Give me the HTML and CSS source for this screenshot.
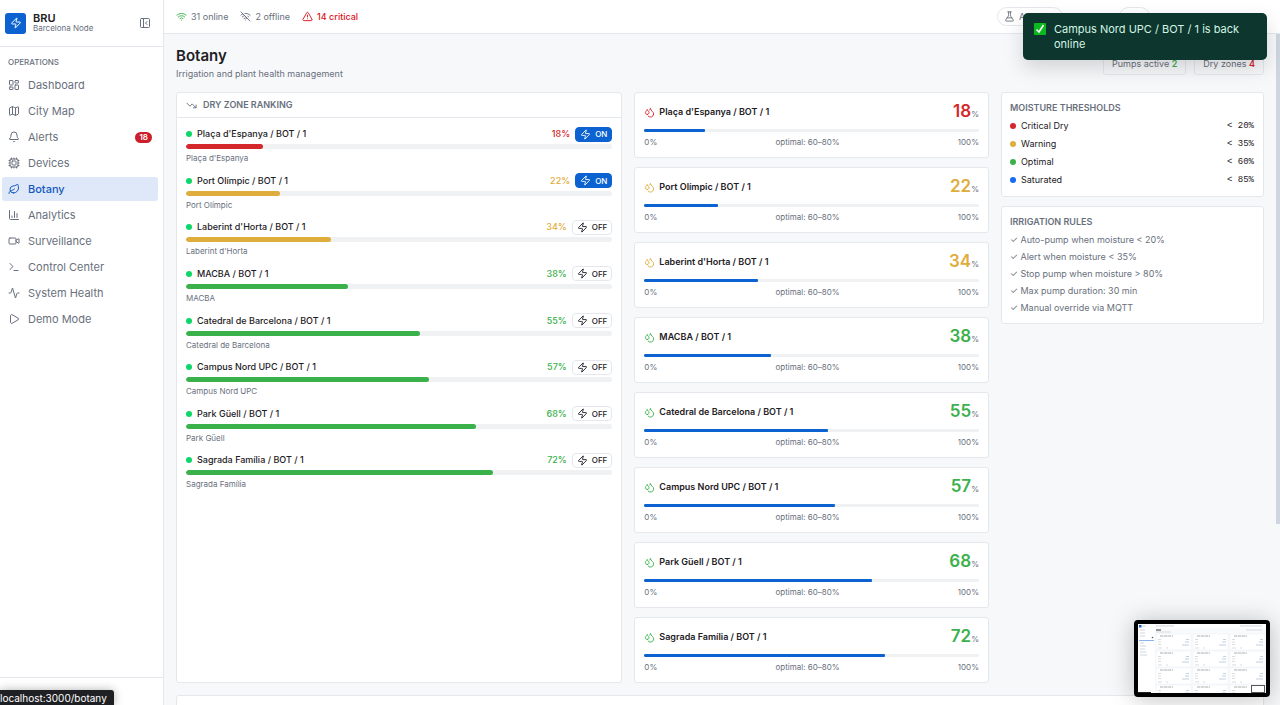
FILE: index.html
```html
<!DOCTYPE html>
<html lang="en">
  <head>
    <meta charset="utf-8" />
    <meta name="viewport" content="width=device-width" />
    <title>BRU - Botany</title>
    <link rel="stylesheet" href="styles.css">
  </head>
  <body>
    <svg class="sprite" aria-hidden="true">
      <symbol id="zap" viewBox="0 0 24 24"><path d="M4 14a1 1 0 0 1-.78-1.63l9.9-10.2a.5.5 0 0 1 .86.46l-1.92 6.02A1 1 0 0 0 13 10h7a1 1 0 0 1 .78 1.63l-9.9 10.2a.5.5 0 0 1-.86-.46l1.92-6.02A1 1 0 0 0 11 14z"/></symbol>
      <symbol id="panel" viewBox="0 0 24 24"><rect width="18" height="18" x="3" y="3" rx="2"/><path d="M9 3v18M16 15l-3-3 3-3"/></symbol>
      <symbol id="dashboard" viewBox="0 0 24 24"><rect width="7" height="9" x="3" y="3" rx="1"/><rect width="7" height="5" x="14" y="3" rx="1"/><rect width="7" height="9" x="14" y="12" rx="1"/><rect width="7" height="5" x="3" y="16" rx="1"/></symbol>
      <symbol id="map" viewBox="0 0 24 24"><path d="M14.1 5.55a2 2 0 0 0 1.8 0l3.65-1.83A1 1 0 0 1 21 4.62v12.76a1 1 0 0 1-.55.9l-4.56 2.27a2 2 0 0 1-1.78 0l-4.22-2.1a2 2 0 0 0-1.78 0l-3.66 1.83A1 1 0 0 1 3 19.38V6.62a1 1 0 0 1 .55-.9l4.56-2.27a2 2 0 0 1 1.78 0zM15 5.76v15M9 3.24v15"/></symbol>
      <symbol id="bell" viewBox="0 0 24 24"><path d="M10.27 21a2 2 0 0 0 3.46 0M3.26 15.33A1 1 0 0 0 4 17h16a1 1 0 0 0 .74-1.67C19.41 13.96 18 12.5 18 8A6 6 0 0 0 6 8c0 4.5-1.41 5.96-2.74 7.33"/></symbol>
      <symbol id="cpu" viewBox="0 0 24 24"><rect width="16" height="16" x="4" y="4" rx="2"/><rect width="8" height="8" x="8" y="8" rx="1"/><path d="M12 20v2M12 2v2M17 20v2M17 2v2M2 12h2M2 17h2M2 7h2M20 12h2M20 17h2M20 7h2M7 20v2M7 2v2"/></symbol>
      <symbol id="leaf" viewBox="0 0 24 24"><path d="M11 20A7 7 0 0 1 9.8 6.1C15.5 5 17 4.48 19 2c1 2 2 4.18 2 8 0 5.5-4.78 10-10 10Z"/><path d="M2 21c0-3 1.85-5.36 5.08-6C9.5 14.52 12 13 13 12"/></symbol>
      <symbol id="chart" viewBox="0 0 24 24"><path d="M3 3v16a2 2 0 0 0 2 2h16M8 17v-3M13 17V5M18 17V9"/></symbol>
      <symbol id="video" viewBox="0 0 24 24"><rect x="2" y="6" width="14" height="12" rx="2"/><path d="m16 13 5.22 3.48a.5.5 0 0 0 .78-.42V7.87a.5.5 0 0 0-.75-.43L16 10.5"/></symbol>
      <symbol id="terminal" viewBox="0 0 24 24"><path d="M12 19h8M4 17l6-6-6-6"/></symbol>
      <symbol id="activity" viewBox="0 0 24 24"><path d="M22 12h-2.48a2 2 0 0 0-1.93 1.46l-2.35 8.36a.25.25 0 0 1-.48 0L9.24 2.18a.25.25 0 0 0-.48 0l-2.35 8.36A2 2 0 0 1 4.49 12H2"/></symbol>
      <symbol id="play" viewBox="0 0 24 24"><path d="M5 5a2 2 0 0 1 3-1.73l12 7a2 2 0 0 1 0 3.46l-12 7A2 2 0 0 1 5 19z"/></symbol>
      <symbol id="wifi" viewBox="0 0 24 24"><path d="M12 20h.01M2 8.82a15 15 0 0 1 20 0M5 12.86a10 10 0 0 1 14 0M8.5 16.43a5 5 0 0 1 7 0"/></symbol>
      <symbol id="wifi-off" viewBox="0 0 24 24"><path d="M12 20h.01M8.5 16.43a5 5 0 0 1 7 0M5 12.86a10 10 0 0 1 5.17-2.69M19 12.86a10 10 0 0 0-2.01-1.52M2 8.82a15 15 0 0 1 4.18-2.64M22 8.82a15 15 0 0 0-11.29-3.76M2 2l20 20"/></symbol>
      <symbol id="alert" viewBox="0 0 24 24"><path d="m21.73 18-8-14a2 2 0 0 0-3.48 0l-8 14A2 2 0 0 0 4 21h16a2 2 0 0 0 1.73-3M12 9v4M12 17h.01"/></symbol>
      <symbol id="flask" viewBox="0 0 24 24"><path d="M10 2v6.29a7 7 0 0 1-1.4 4.2L4 19a2 2 0 0 0 1.700 3h12.600a2 2 0 0 0 1.700-3l-4.600-6.500a7 7 0 0 1-1.400-4.200V2M8 2h8M7 15h10"/></symbol>
      <symbol id="trend" viewBox="0 0 24 24"><path d="M16 17h6v-6M22 17l-8.5-8.5-5 5L2 7"/></symbol>
      <symbol id="drops" viewBox="0 0 24 24"><path d="M7 16.3c2.2 0 4-1.83 4-4.05 0-1.16-.57-2.26-1.71-3.19S7.29 6.75 7 5.3c-.29 1.45-1.14 2.84-2.29 3.76S3 11.1 3 12.25c0 2.22 1.8 4.05 4 4.05z"/><path d="M12.56 6.6A10.97 10.97 0 0 0 14 3.02c.5 2.5 2 4.9 4 6.5s3 3.5 3 5.5a6.98 6.98 0 0 1-11.91 4.97"/></symbol>
    </svg>

    <div class="app">
      <aside class="sidebar">
        <div class="brand">
          <span class="brand-logo"><svg class="icon"><use href="#zap"/></svg></span>
          <div class="brand-text">
            <strong>BRU</strong>
            <span>Barcelona Node</span>
          </div>
          <button class="collapse" aria-label="Collapse sidebar"><svg class="icon"><use href="#panel"/></svg></button>
        </div>
        <nav class="nav">
          <h2>OPERATIONS</h2>
          <a href="#dashboard"><svg class="icon"><use href="#dashboard"/></svg>Dashboard</a>
          <a href="#map"><svg class="icon"><use href="#map"/></svg>City Map</a>
          <a href="#alerts"><svg class="icon"><use href="#bell"/></svg>Alerts<span class="badge">18</span></a>
          <a href="#devices"><svg class="icon"><use href="#cpu"/></svg>Devices</a>
          <a href="#botany" class="active"><svg class="icon"><use href="#leaf"/></svg>Botany</a>
          <a href="#analytics"><svg class="icon"><use href="#chart"/></svg>Analytics</a>
          <a href="#surveillance"><svg class="icon"><use href="#video"/></svg>Surveillance</a>
          <a href="#control"><svg class="icon"><use href="#terminal"/></svg>Control Center</a>
          <a href="#health"><svg class="icon"><use href="#activity"/></svg>System Health</a>
          <a href="#demo"><svg class="icon"><use href="#play"/></svg>Demo Mode</a>
        </nav>
        <div class="sidebar-footer"></div>
      </aside>

      <div class="main">
        <header class="topbar">
          <span class="stat"><svg class="icon green"><use href="#wifi"/></svg>31 online</span>
          <span class="stat"><svg class="icon"><use href="#wifi-off"/></svg>2 offline</span>
          <span class="stat critical"><svg class="icon"><use href="#alert"/></svg>14 critical</span>
          <div class="topbar-actions">
            <button class="pill"><svg class="icon"><use href="#flask"/></svg>A</button>
            <button class="pill pill-small" aria-label="Mode"></button>
          </div>
        </header>

        <div class="scroller">
          <main class="content">
            <div class="page-head">
              <div>
                <h1>Botany</h1>
                <p>Irrigation and plant health management</p>
              </div>
              <div class="chips">
                <span class="chip">Pumps active <b class="green">2</b></span>
                <span class="chip">Dry zones <b class="red">4</b></span>
              </div>
            </div>

            <div class="grid">
              <section class="card ranking">
                <h2 class="card-head"><svg class="icon"><use href="#trend"/></svg>DRY ZONE RANKING</h2>
                <div class="zones">
                  <div class="zone">
                    <div class="zone-row"><i class="dot"></i><span class="zone-name">Plaça d'Espanya / BOT / 1</span><b class="red">18%</b><button class="pump on"><svg class="icon"><use href="#zap"/></svg>ON</button></div>
                    <div class="bar"><div class="fill bg-red" style="width: 18%"></div></div>
                    <small>Plaça d'Espanya</small>
                  </div>
                  <div class="zone">
                    <div class="zone-row"><i class="dot"></i><span class="zone-name">Port Olímpic / BOT / 1</span><b class="yellow">22%</b><button class="pump on"><svg class="icon"><use href="#zap"/></svg>ON</button></div>
                    <div class="bar"><div class="fill bg-yellow" style="width: 22%"></div></div>
                    <small>Port Olímpic</small>
                  </div>
                  <div class="zone">
                    <div class="zone-row"><i class="dot"></i><span class="zone-name">Laberint d'Horta / BOT / 1</span><b class="yellow">34%</b><button class="pump"><svg class="icon"><use href="#zap"/></svg>OFF</button></div>
                    <div class="bar"><div class="fill bg-yellow" style="width: 34%"></div></div>
                    <small>Laberint d'Horta</small>
                  </div>
                  <div class="zone">
                    <div class="zone-row"><i class="dot"></i><span class="zone-name">MACBA / BOT / 1</span><b class="green">38%</b><button class="pump"><svg class="icon"><use href="#zap"/></svg>OFF</button></div>
                    <div class="bar"><div class="fill bg-green" style="width: 38%"></div></div>
                    <small>MACBA</small>
                  </div>
                  <div class="zone">
                    <div class="zone-row"><i class="dot"></i><span class="zone-name">Catedral de Barcelona / BOT / 1</span><b class="green">55%</b><button class="pump"><svg class="icon"><use href="#zap"/></svg>OFF</button></div>
                    <div class="bar"><div class="fill bg-green" style="width: 55%"></div></div>
                    <small>Catedral de Barcelona</small>
                  </div>
                  <div class="zone">
                    <div class="zone-row"><i class="dot"></i><span class="zone-name">Campus Nord UPC / BOT / 1</span><b class="green">57%</b><button class="pump"><svg class="icon"><use href="#zap"/></svg>OFF</button></div>
                    <div class="bar"><div class="fill bg-green" style="width: 57%"></div></div>
                    <small>Campus Nord UPC</small>
                  </div>
                  <div class="zone">
                    <div class="zone-row"><i class="dot"></i><span class="zone-name">Park Güell / BOT / 1</span><b class="green">68%</b><button class="pump"><svg class="icon"><use href="#zap"/></svg>OFF</button></div>
                    <div class="bar"><div class="fill bg-green" style="width: 68%"></div></div>
                    <small>Park Güell</small>
                  </div>
                  <div class="zone">
                    <div class="zone-row"><i class="dot"></i><span class="zone-name">Sagrada Família / BOT / 1</span><b class="green">72%</b><button class="pump"><svg class="icon"><use href="#zap"/></svg>OFF</button></div>
                    <div class="bar"><div class="fill bg-green" style="width: 72%"></div></div>
                    <small>Sagrada Família</small>
                  </div>
                </div>
              </section>

              <div class="gauges">
                <article class="card gauge">
                  <div class="gauge-row"><svg class="icon red"><use href="#drops"/></svg><h3>Plaça d'Espanya / BOT / 1</h3><span class="value"><b class="red">18</b>%</span></div>
                  <div class="bar thin"><div class="fill bg-blue" style="width: 18%"></div></div>
                  <div class="scale"><span>0%</span><span>optimal: 60–80%</span><span>100%</span></div>
                </article>
                <article class="card gauge">
                  <div class="gauge-row"><svg class="icon yellow"><use href="#drops"/></svg><h3>Port Olímpic / BOT / 1</h3><span class="value"><b class="yellow">22</b>%</span></div>
                  <div class="bar thin"><div class="fill bg-blue" style="width: 22%"></div></div>
                  <div class="scale"><span>0%</span><span>optimal: 60–80%</span><span>100%</span></div>
                </article>
                <article class="card gauge">
                  <div class="gauge-row"><svg class="icon yellow"><use href="#drops"/></svg><h3>Laberint d'Horta / BOT / 1</h3><span class="value"><b class="yellow">34</b>%</span></div>
                  <div class="bar thin"><div class="fill bg-blue" style="width: 34%"></div></div>
                  <div class="scale"><span>0%</span><span>optimal: 60–80%</span><span>100%</span></div>
                </article>
                <article class="card gauge">
                  <div class="gauge-row"><svg class="icon green"><use href="#drops"/></svg><h3>MACBA / BOT / 1</h3><span class="value"><b class="green">38</b>%</span></div>
                  <div class="bar thin"><div class="fill bg-blue" style="width: 38%"></div></div>
                  <div class="scale"><span>0%</span><span>optimal: 60–80%</span><span>100%</span></div>
                </article>
                <article class="card gauge">
                  <div class="gauge-row"><svg class="icon green"><use href="#drops"/></svg><h3>Catedral de Barcelona / BOT / 1</h3><span class="value"><b class="green">55</b>%</span></div>
                  <div class="bar thin"><div class="fill bg-blue" style="width: 55%"></div></div>
                  <div class="scale"><span>0%</span><span>optimal: 60–80%</span><span>100%</span></div>
                </article>
                <article class="card gauge">
                  <div class="gauge-row"><svg class="icon green"><use href="#drops"/></svg><h3>Campus Nord UPC / BOT / 1</h3><span class="value"><b class="green">57</b>%</span></div>
                  <div class="bar thin"><div class="fill bg-blue" style="width: 57%"></div></div>
                  <div class="scale"><span>0%</span><span>optimal: 60–80%</span><span>100%</span></div>
                </article>
                <article class="card gauge">
                  <div class="gauge-row"><svg class="icon green"><use href="#drops"/></svg><h3>Park Güell / BOT / 1</h3><span class="value"><b class="green">68</b>%</span></div>
                  <div class="bar thin"><div class="fill bg-blue" style="width: 68%"></div></div>
                  <div class="scale"><span>0%</span><span>optimal: 60–80%</span><span>100%</span></div>
                </article>
                <article class="card gauge">
                  <div class="gauge-row"><svg class="icon green"><use href="#drops"/></svg><h3>Sagrada Família / BOT / 1</h3><span class="value"><b class="green">72</b>%</span></div>
                  <div class="bar thin"><div class="fill bg-blue" style="width: 72%"></div></div>
                  <div class="scale"><span>0%</span><span>optimal: 60–80%</span><span>100%</span></div>
                </article>
              </div>

              <div class="info">
                <section class="card panel">
                  <h2>MOISTURE THRESHOLDS</h2>
                  <ul class="thresholds">
                    <li><i class="dot bg-red"></i>Critical Dry<code>&lt; 20%</code></li>
                    <li><i class="dot bg-yellow"></i>Warning<code>&lt; 35%</code></li>
                    <li><i class="dot bg-green"></i>Optimal<code>&lt; 60%</code></li>
                    <li><i class="dot bg-bright"></i>Saturated<code>&lt; 85%</code></li>
                  </ul>
                </section>
                <section class="card panel">
                  <h2>IRRIGATION RULES</h2>
                  <ul class="rules">
                    <li>✓ Auto-pump when moisture &lt; 20%</li>
                    <li>✓ Alert when moisture &lt; 35%</li>
                    <li>✓ Stop pump when moisture &gt; 80%</li>
                    <li>✓ Max pump duration: 30 min</li>
                    <li>✓ Manual override via MQTT</li>
                  </ul>
                </section>
              </div>
            </div>

            <section class="card history"></section>
          </main>
          <div class="scrollbar"></div>
        </div>
      </div>
    </div>

    <div class="toast" role="status">
      <svg class="toast-check" viewBox="0 0 12 12"><rect width="12" height="12" rx="1" fill="#0bb81f"/><path d="M2.5 6.5 5 9l4.5-7" fill="none" stroke="#fff" stroke-width="1.6"/></svg>
      <span>Campus Nord UPC / BOT / 1 is back online</span>
    </div>

    <div class="thumbnail">
      <svg viewBox="0 0 128 69" preserveAspectRatio="none">
        <defs>
          <g id="mini-card">
            <rect x="0" y="0" width="35" height="16" fill="#fff" stroke="#edf0f3" stroke-width=".6"/>
            <path d="M4 2h13" stroke="#999" stroke-width=".8" stroke-dasharray="3 .6 4 .5"/>
            <path d="M2 5.5h3M2 8h3M2 10.5h3M2 14h4M10 14h2" stroke="#c9cdd2" stroke-width=".7"/>
            <path d="M30 5.5h3M29 8h4M26 11h7" stroke="#a5bdd5" stroke-width=".7"/>
          </g>
        </defs>
        <rect width="128" height="69" fill="#fff"/>
        <rect x="17" y="4" width="111" height="65" fill="#f8fafb"/>
        <rect x="1" y="1" width="2.5" height="2.5" fill="#1765c5"/>
        <path d="M4 2h4M18 2h18M102 2h22" stroke="#c5cbd3" stroke-width=".8"/>
        <path d="M18 6h5" stroke="#333"/>
        <path d="M18 8h15M108 6h16" stroke="#c8cdd2" stroke-width=".7"/>
        <path d="M2 6h5M2 9h5M2 12h5M2 19h4M2 22h6M2 25h5M2 28h6M2 31h7" stroke="#c3ccd9" stroke-width=".8"/>
        <path d="M1 16.5h15" stroke="#8db4e6"/>
        <circle cx="14.5" cy="13.5" r=".8" fill="#555"/>
        <use href="#mini-card" x="18" y="10"/><use href="#mini-card" x="55" y="10"/><use href="#mini-card" x="92" y="10"/>
        <use href="#mini-card" x="18" y="27"/><use href="#mini-card" x="55" y="27"/><use href="#mini-card" x="92" y="27"/>
        <use href="#mini-card" x="18" y="44"/><use href="#mini-card" x="55" y="44"/><use href="#mini-card" x="92" y="44"/>
        <use href="#mini-card" x="18" y="61"/><use href="#mini-card" x="55" y="61"/><use href="#mini-card" x="92" y="61"/>
        <rect x="113.5" y="61.5" width="13" height="7" fill="#fff" stroke="#555"/>
        <path d="M0 68.5h13" stroke="#222"/>
      </svg>
    </div>

    <div class="link-status">localhost:3000/botany</div>
  </body>
</html>
```
FILE: styles.css
```css
:root {
  --border: #e4e8ec;
  --muted: #69707d;
  --text: #1d2024;
  --red: #d4272c;
  --yellow: #dfad3c;
  --green: #3bb14c;
  --blue: #0b62d0;
}

* {
  box-sizing: border-box;
}

body {
  margin: 0;
  height: 100vh;
  overflow: hidden;
  font: 9px/12px Inter, "Liberation Sans", sans-serif;
  color: var(--text);
}

h1, h2, h3, p, ul {
  margin: 0;
  padding: 0;
}

ul {
  list-style: none;
}

button {
  font: inherit;
  color: inherit;
  background: none;
  border: 0;
  padding: 0;
}

.sprite {
  position: absolute;
  width: 0;
  height: 0;
}

.icon {
  width: 12px;
  height: 12px;
  flex-shrink: 0;
  fill: none;
  stroke: currentColor;
  stroke-width: 2;
  stroke-linecap: round;
  stroke-linejoin: round;
}

.red { color: var(--red); }
.yellow { color: var(--yellow); }
.green { color: var(--green); }
.bg-red { background: var(--red); }
.bg-yellow { background: var(--yellow); }
.bg-green { background: var(--green); }
.bg-blue { background: var(--blue); }
.bg-bright { background: #176bf0; }

.app {
  display: flex;
  height: 100vh;
}

/* sidebar */
.sidebar {
  display: flex;
  flex-direction: column;
  width: 164px;
  flex-shrink: 0;
  border-right: 1px solid var(--border);
  background: #fff;
}

.brand {
  display: flex;
  align-items: center;
  gap: 7px;
  height: 47px;
  padding: 0 12px 0 5px;
  border-bottom: 1px solid var(--border);
}

.brand-logo {
  display: grid;
  place-items: center;
  width: 21px;
  height: 21px;
  border-radius: 3px;
  background: var(--blue);
  color: #fff;
}

.brand-text {
  display: flex;
  flex-direction: column;
  flex: 1;
  font-size: 8px;
  line-height: 10px;
  color: var(--muted);
}

.brand-text strong {
  font-size: 11px;
  font-weight: 600;
  color: var(--text);
}

.collapse {
  display: flex;
  color: var(--muted);
}

.nav {
  display: flex;
  flex-direction: column;
  gap: 2px;
  flex: 1;
  padding: 9px 5px 0 2px;
}

.nav h2 {
  padding: 0 6px;
  margin-bottom: 3px;
  font-size: 8px;
  font-weight: 500;
  color: var(--muted);
}

.nav a {
  display: flex;
  align-items: center;
  gap: 8px;
  height: 24px;
  padding: 0 6px;
  border-radius: 3px;
  font-size: 11px;
  color: var(--muted);
  text-decoration: none;
}

.nav a.active {
  background: #dfe8f8;
  color: #1459bf;
  font-weight: 500;
}

.badge {
  margin-left: auto;
  padding: 0 4px;
  border-radius: 6px;
  background: #cc1f2c;
  color: #fff;
  font-size: 8px;
  line-height: 11px;
  font-weight: 600;
}

.sidebar-footer {
  height: 28px;
  border-top: 1px solid var(--border);
}

/* top bar */
.main {
  display: flex;
  flex-direction: column;
  flex: 1;
  min-width: 0;
}

.topbar {
  display: flex;
  align-items: center;
  gap: 12px;
  height: 34px;
  flex-shrink: 0;
  padding: 0 12px;
  border-bottom: 1px solid var(--border);
}

.stat {
  display: flex;
  align-items: center;
  gap: 4px;
  color: var(--muted);
}

.stat .icon,
.pill .icon,
.gauge .icon,
.card-head .icon,
.pump .icon {
  width: 11px;
  height: 11px;
}

.stat.critical {
  color: #dc131d;
  font-weight: 500;
}

.topbar-actions {
  display: flex;
  gap: 56px;
  margin-left: auto;
  padding-right: 118px;
}

.pill {
  display: flex;
  align-items: center;
  gap: 4px;
  width: 66px;
  height: 19px;
  padding: 0 6px;
  border: 1px solid var(--border);
  border-radius: 10px;
  color: var(--muted);
}

.pill-small {
  width: 31px;
}

/* page */
.scroller {
  display: flex;
  flex: 1;
  min-height: 0;
  background: #f7f8fa;
}

.content {
  flex: 1;
  min-width: 0;
  padding: 12px;
  overflow: hidden;
}

.scrollbar {
  width: 4px;
  height: 73%;
  background: #cfd6df;
}

.page-head {
  display: flex;
  justify-content: space-between;
  align-items: center;
  margin-bottom: 11px;
}

.page-head h1 {
  font-size: 15px;
  line-height: 20px;
  font-weight: 600;
}

.page-head p {
  line-height: 15px;
  color: var(--muted);
}

.chips {
  display: flex;
  gap: 8px;
}

.chip {
  padding: 4px 8px;
  border: 1px solid var(--border);
  border-radius: 3px;
  color: var(--muted);
}

.chip b {
  font-weight: 600;
}

.grid {
  display: grid;
  grid-template-columns: repeat(12, 1fr);
  gap: 12px;
}

.card {
  border: 1px solid var(--border);
  border-radius: 3px;
  background: #fff;
}

.ranking {
  grid-column: span 5;
}

.card-head {
  display: flex;
  align-items: center;
  gap: 6px;
  height: 25px;
  padding: 0 9px;
  border-bottom: 1px solid var(--border);
  font-size: 9px;
  font-weight: 600;
  color: var(--muted);
}

.zones {
  display: grid;
  grid-auto-rows: 1fr;
  min-height: 381px;
  padding: 8px 9px 0;
}

.zone-row {
  display: flex;
  align-items: center;
  gap: 5px;
  height: 16px;
}

.zone-name {
  flex: 1;
  font-weight: 500;
}

.zone-row b {
  font-weight: 500;
}

.dot {
  width: 6px;
  height: 6px;
  border-radius: 50%;
}

.zone .dot {
  background: #0bd868;
}

.pump {
  display: flex;
  align-items: center;
  gap: 4px;
  height: 15px;
  padding: 0 4px;
  border: 1px solid var(--border);
  border-radius: 4px;
  font-size: 8px;
  font-weight: 500;
}

.pump.on {
  border-color: var(--blue);
  background: var(--blue);
  color: #fff;
}

.bar {
  height: 5px;
  margin: 2px 0 3px;
  border-radius: 3px;
  background: #f0f1f3;
  overflow: hidden;
}

.fill {
  height: 100%;
  border-radius: 3px;
}

.zone small {
  display: block;
  font-size: 8px;
  color: var(--muted);
}

.gauges {
  grid-column: span 4;
  display: flex;
  flex-direction: column;
  gap: 9px;
}

.gauge {
  height: 66px;
  padding: 9px;
}

.gauge-row {
  display: flex;
  align-items: center;
  gap: 4px;
  height: 20px;
}

.gauge h3 {
  flex: 1;
  font-size: 9px;
  font-weight: 600;
}

.value {
  font-size: 8px;
  line-height: 20px;
  color: var(--muted);
}

.value b {
  font-size: 17px;
  font-weight: 600;
}

.bar.thin {
  height: 3px;
  margin: 7px 0 4px;
  border-radius: 1px;
}

.thin .fill {
  border-radius: 1px;
}

.scale {
  display: flex;
  justify-content: space-between;
  font-size: 8px;
  color: var(--muted);
}

.info {
  grid-column: span 3;
  display: flex;
  flex-direction: column;
  gap: 9px;
}

.panel {
  padding: 9px 9px 7px 8px;
}

.panel h2 {
  margin-bottom: 3px;
  font-size: 9px;
  font-weight: 600;
  color: var(--muted);
}

.thresholds li {
  display: flex;
  align-items: center;
  gap: 5px;
  line-height: 18px;
}

.thresholds code {
  margin-left: auto;
  font: 9px "Liberation Mono", monospace;
}

.rules li {
  line-height: 17px;
  color: var(--muted);
}

.history {
  height: 200px;
  margin-top: 12px;
}

/* overlays */
.toast {
  position: absolute;
  top: 13px;
  right: 13px;
  display: flex;
  gap: 8px;
  width: 244px;
  padding: 9px 11px 8px;
  border-radius: 5px;
  background: #0d362e;
  color: #d4f5e4;
  font-size: 11px;
  line-height: 15px;
  box-shadow: 0 8px 20px rgba(0, 0, 0, 0.15);
}

.toast-check {
  width: 12px;
  height: 12px;
  flex-shrink: 0;
  margin-top: 1px;
}

.thumbnail {
  position: absolute;
  right: 10px;
  bottom: 8px;
  width: 136px;
  height: 77px;
  border: 4px solid #000;
  border-radius: 4px;
  background: #fff;
  box-shadow: 0 2px 24px rgba(0, 0, 0, 0.25);
}

.thumbnail svg {
  display: block;
  width: 100%;
  height: 100%;
}

.link-status {
  position: absolute;
  left: 0;
  bottom: 0;
  padding: 2px 7px 0 0;
  border-top-right-radius: 3px;
  background: #1f2023;
  color: #fff;
  font-size: 10px;
  line-height: 13px;
  box-shadow: 0 0 10px rgba(0, 0, 0, 0.3);
}
```
